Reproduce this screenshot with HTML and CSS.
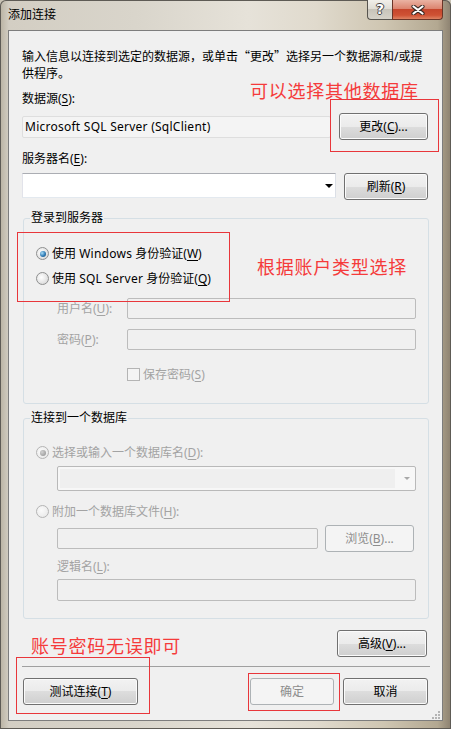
FILE: index.html
```html
<!DOCTYPE html>
<html lang="zh-CN">
<head>
    <meta charset="UTF-8">
    <meta name="viewport" content="width=device-width, initial-scale=1.0">
    <title>添加连接</title>
    <link rel="stylesheet" href="styles.css">
</head>

<body>
    <div class="window">
        <!-- barra del titolo -->
        <div class="titlebar">
            <span class="title">添加连接</span>
            <div class="caption">
                <span class="cap-btn cap-help">?</span>
                <span class="cap-btn cap-close">
                    <svg width="14" height="10" viewBox="0 0 14 10">
                        <path d="M2.5 1.5 L11.5 8.5 M11.5 1.5 L2.5 8.5" stroke="#3a2a25" stroke-width="4.2" stroke-linecap="round"/>
                        <path d="M2.5 1.5 L11.5 8.5 M11.5 1.5 L2.5 8.5" stroke="#ffffff" stroke-width="2.2" stroke-linecap="round"/>
                    </svg>
                </span>
            </div>
        </div>

        <div class="client">
            <p class="intro">输入信息以连接到选定的数据源，或单击<span class="cjk">“更改”</span>选择另一个数据源和/或提<br>供程序。</p>

            <div class="label label-source">数据源(<u>S</u>):</div>
            <div class="row row-source">
                <div class="textbox readonly source-box"><span class="latin">Microsoft SQL Server (SqlClient)</span></div>
                <button class="btn btn-change" type="button">更改(<u>C</u>)...</button>
            </div>

            <div class="label label-server">服务器名(<u>E</u>):</div>
            <div class="row row-server">
                <div class="combo server-combo"><span class="arrow"></span></div>
                <button class="btn btn-refresh" type="button">刷新(<u>R</u>)</button>
            </div>

            <!-- gruppo login -->
            <div class="group group-login">
                <div class="group-title">登录到服务器</div>
                <div class="radio-row radio-windows"><span class="radio checked"></span>使用&nbsp;<span class="latin">Windows</span>&nbsp;身份验证(<u>W</u>)</div>
                <div class="radio-row radio-sql"><span class="radio"></span>使用&nbsp;<span class="latin">SQL Server</span>&nbsp;身份验证(<u>Q</u>)</div>
                <div class="field-row user-row">
                    <span class="field-label">用户名(<u>U</u>):</span>
                    <div class="textbox disabled user-box"></div>
                </div>
                <div class="field-row pass-row">
                    <span class="field-label">密码(<u>P</u>):</span>
                    <div class="textbox disabled pass-box"></div>
                </div>
                <div class="check-row"><span class="checkbox"></span>保存密码(<u>S</u>)</div>
            </div>

            <!-- gruppo database -->
            <div class="group group-db">
                <div class="group-title">连接到一个数据库</div>
                <div class="radio-row off radio-dbname"><span class="radio checked off"></span>选择或输入一个数据库名(<u>D</u>):</div>
                <div class="combo disabled db-combo"><span class="combo-field"></span><span class="arrow"></span></div>
                <div class="radio-row off radio-attach"><span class="radio off"></span>附加一个数据库文件(<u>H</u>):</div>
                <div class="row row-file">
                    <div class="textbox disabled file-box"></div>
                    <button class="btn disabled btn-browse" type="button">浏览(<u>B</u>)...</button>
                </div>
                <div class="label off label-logic">逻辑名(<u>L</u>):</div>
                <div class="textbox disabled logic-box"></div>
            </div>

            <div class="row row-advanced">
                <button class="btn btn-advanced" type="button">高级(<u>V</u>)...</button>
            </div>

            <div class="separator"></div>

            <div class="row row-bottom">
                <button class="btn btn-test" type="button">测试连接(<u>T</u>)</button>
                <span class="spacer"></span>
                <button class="btn disabled btn-ok" type="button">确定</button>
                <button class="btn btn-cancel" type="button">取消</button>
            </div>
        </div>

        <!-- note rosse sopra lo screenshot -->
        <span class="note note-change">可以选择其他数据库</span>
        <span class="mark mark-change"></span>
        <span class="note note-auth">根据账户类型选择</span>
        <span class="mark mark-auth"></span>
        <span class="note note-test">账号密码无误即可</span>
        <span class="mark mark-test"></span>
        <span class="mark mark-ok"></span>

        <svg class="grip" width="8" height="8" viewBox="0 0 8 8">
            <rect x="6" y="0" width="2" height="2" fill="#b4b4b4"/>
            <rect x="3" y="3" width="2" height="2" fill="#b4b4b4"/>
            <rect x="6" y="3" width="2" height="2" fill="#b4b4b4"/>
            <rect x="0" y="6" width="2" height="2" fill="#b4b4b4"/>
            <rect x="3" y="6" width="2" height="2" fill="#b4b4b4"/>
            <rect x="6" y="6" width="2" height="2" fill="#b4b4b4"/>
        </svg>
    </div>
</body>
</html>
```

FILE: styles.css
```css
* {
    box-sizing: border-box;
}

body {
    margin: 0;
    background: #c9c3b5;
    font-family: "Noto Sans", "Noto Sans CJK SC", sans-serif;
    font-size: 12px;
    line-height: 17px;
    color: #000;
}

.cjk {
    font-family: "Noto Sans CJK SC", sans-serif;
}

.latin {
    letter-spacing: 0.25px;
}

u {
    text-decoration: underline;
    text-underline-offset: 2px;
}

.window {
    position: relative;
    width: 451px;
    height: 729px;
    padding: 0 8px 8px;
    display: flex;
    flex-direction: column;
    border-radius: 6px 6px 0 0;
    background: linear-gradient(90deg, #b9b2a2 0%, #d3cec3 2%, #d9d5cb 30%, #e6e2d9 55%, #e0dacd 70%, #cfc6b2 85%, #b3a891 97%, #8c8170 100%);
    box-shadow: inset 0 0 0 1px #5e5b55;
}

/* titolo */

.titlebar {
    height: 30px;
    display: flex;
    justify-content: space-between;
    align-items: flex-start;
}

.title {
    padding-top: 6px;
    color: #000;
}

.caption {
    display: flex;
}

.cap-btn {
    height: 20px;
    display: flex;
    align-items: center;
    justify-content: center;
    border: 1px solid #57544e;
    border-top: none;
}

.cap-help {
    width: 25px;
    border-right: none;
    border-radius: 0 0 0 4px;
    background: linear-gradient(#f1efea, #e0ddd5 45%, #c8c4ba 50%, #d6d2c8 100%);
    color: #fff;
    font-family: "DejaVu Sans", sans-serif;
    font-weight: bold;
    font-size: 14px;
    text-shadow: 1px 0 0 #444, -1px 0 0 #444, 0 1px 0 #444, 0 -1px 0 #444;
}

.cap-close {
    width: 51px;
    border-color: #6b3528;
    border-radius: 0 0 4px 0;
    background: linear-gradient(#eab3a3, #dc8570 45%, #c6462c 50%, #cf5234 80%, #de8363 100%);
}

/* area client */

.client {
    flex: 1;
    background: #f0f0f0;
    border: 1px solid #7d7d7d;
    padding: 16px 14px 0 13px;
}

.intro {
    margin: 0;
    white-space: nowrap;
}

.label-source {
    margin-top: 8px;
}

.row {
    display: flex;
    align-items: center;
}

.row-source {
    margin-top: 6px;
    height: 27px;
    gap: 8px;
}

.label-server {
    margin-top: 10px;
}

.row-server {
    margin-top: 6px;
    gap: 8px;
    align-items: flex-start;
}

.textbox {
    height: 21px;
    border: 1px solid #b5b5b5;
    border-radius: 2px;
}

.readonly {
    height: 22px;
    background: #f4f4f4;
    border-color: #dedede;
    padding: 1px 2px 0;
}

.source-box {
    width: 309px;
}

.disabled {
    background: #f0f0f0;
    border-color: #bcbcbc;
}

.combo {
    height: 25px;
    display: flex;
    align-items: center;
    justify-content: flex-end;
    background: #fff;
    border: 1px solid;
    border-color: #abadb3 #dbdfe6 #e3e9ef #e2e3ea;
    padding-right: 2px;
}

.server-combo {
    width: 314px;
}

.arrow {
    width: 0;
    height: 0;
    border-left: 4px solid transparent;
    border-right: 4px solid transparent;
    border-top: 4px solid #000;
}

/* pulsanti */

.btn {
    height: 27px;
    padding: 0;
    display: flex;
    align-items: center;
    justify-content: center;
    font: inherit;
    color: #000;
    border: 1px solid #707070;
    border-radius: 3px;
    background: linear-gradient(#f2f2f2 0%, #ebebeb 50%, #dddddd 50%, #cfcfcf 100%);
    box-shadow: inset 0 0 0 1px #fbfbfb;
}

.btn.disabled {
    color: #8d8d8d;
    border-color: #adb2b5;
    background: #f4f4f4;
    box-shadow: none;
}

.btn-change {
    width: 89px;
}

.btn-refresh {
    width: 84px;
}

/* gruppi */

.group {
    border: 1px solid #d5dfe5;
    border-radius: 3px;
    margin-right: -1px;
    margin-left: 1px;
}

.group-title {
    margin: -10px 0 0 6px;
    padding: 0 1px;
    width: fit-content;
    background: #f0f0f0;
}

.group-login {
    margin-top: 18px;
    padding-bottom: 20px;
}

.group-db {
    margin-top: 14px;
    padding-bottom: 17px;
}

.radio-row {
    display: flex;
    align-items: center;
    padding-left: 12px;
}

.radio-windows {
    margin-top: 19px;
}

.radio-sql {
    margin-top: 8px;
}

.radio {
    position: relative;
    width: 13px;
    height: 13px;
    margin-right: 3px;
    border: 1px solid #8e8f8f;
    border-radius: 50%;
    background: radial-gradient(circle at 40% 40%, #ffffff 0%, #e6e6e6 55%, #cfcfcf 100%);
}

.radio.checked::after {
    content: "";
    position: absolute;
    left: 2.5px;
    top: 2.5px;
    width: 6px;
    height: 6px;
    border-radius: 50%;
    background: radial-gradient(circle at 35% 35%, #a8dcf7 0%, #2f7bb5 55%, #1b4b74 100%);
}

.radio.off {
    border-color: #b4b4b4;
    background: radial-gradient(circle at 40% 40%, #fafafa 0%, #eeeeee 60%, #e2e2e2 100%);
}

.radio.checked.off::after {
    background: radial-gradient(circle at 35% 35%, #d2d2d2 0%, #a2a2a2 70%, #8f8f8f 100%);
}

.off,
.field-label,
.check-row {
    color: #a3a3a3;
}

.field-row {
    display: grid;
    grid-template-columns: 70px 289px;
    align-items: center;
    padding-left: 33px;
}

.user-row {
    margin-top: 11px;
}

.pass-row {
    margin-top: 10px;
}

.check-row {
    display: flex;
    align-items: center;
    margin-top: 16px;
    padding-left: 103px;
}

.checkbox {
    width: 13px;
    height: 13px;
    margin-right: 3px;
    border: 1px solid #b4b4b4;
    background: #f4f4f4;
}

.radio-dbname {
    margin-top: 18px;
}

.db-combo {
    margin: 5px 0 0 33px;
    width: 359px;
    height: 25px;
    padding: 2px 5px 2px 2px;
    justify-content: space-between;
    background: #f7f7f7;
    border-color: #b9b9b9;
    border-radius: 2px;
}

.combo-field {
    width: 335px;
    height: 19px;
    background: #efefef;
}

.db-combo .arrow {
    border-top-color: #a8a8a8;
    border-left-width: 3px;
    border-right-width: 3px;
    border-top-width: 3px;
}

.radio-attach {
    margin-top: 12px;
}

.row-file {
    margin-top: 5px;
    padding-left: 33px;
    gap: 7px;
}

.file-box {
    width: 261px;
}

.btn-browse {
    width: 89px;
}

.label-logic {
    margin-top: 6px;
    padding-left: 33px;
}

.logic-box {
    margin: 4px 0 0 33px;
    width: 359px;
    height: 22px;
}

/* parte in basso */

.row-advanced {
    margin-top: 11px;
    justify-content: flex-end;
    padding-right: 1px;
}

.btn-advanced {
    width: 90px;
}

.separator {
    margin: 9px -2px 0 0;
    height: 1px;
    background: #a0a0a0;
}

.row-bottom {
    margin-top: 11px;
    gap: 9px;
}

.btn-test {
    margin-left: 1px;
    width: 115px;
}

.spacer {
    flex: 1;
}

.btn-ok {
    width: 84px;
}

.btn-cancel {
    width: 85px;
}

/* annotazioni rosse */

.note {
    position: absolute;
    font-family: "Noto Sans CJK SC", sans-serif;
    font-size: 18px;
    line-height: 18px;
    letter-spacing: 0.75px;
    color: #f53b3b;
    white-space: nowrap;
}

.note-change {
    left: 250px;
    top: 81px;
}

.note-auth {
    left: 257px;
    top: 257px;
}

.note-test {
    left: 31px;
    top: 636px;
}

.mark {
    position: absolute;
    border: 1px solid #e8363b;
}

.mark-change {
    left: 330px;
    top: 99px;
    width: 109px;
    height: 53px;
}

.mark-auth {
    left: 17px;
    top: 232px;
    width: 213px;
    height: 70px;
}

.mark-test {
    left: 16px;
    top: 657px;
    width: 134px;
    height: 57px;
}

.mark-ok {
    left: 248px;
    top: 673px;
    width: 92px;
    height: 38px;
}

.grip {
    position: absolute;
    left: 432px;
    top: 711px;
}
```
